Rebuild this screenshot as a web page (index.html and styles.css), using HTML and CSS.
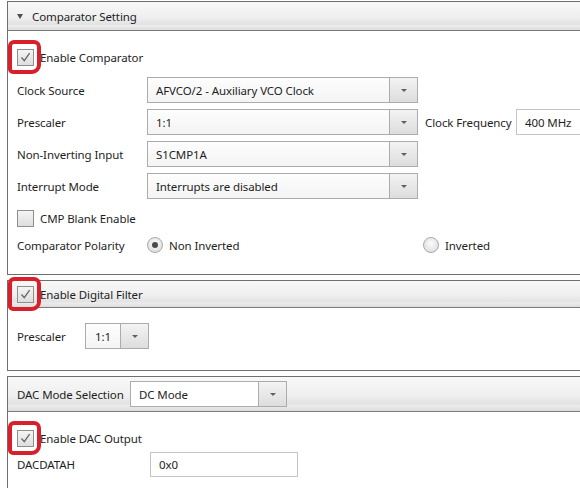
FILE: index.html
```html
<!DOCTYPE html>
<html>
<head>
<meta charset="utf-8">
<link rel="stylesheet" href="styles.css">
</head>
<body>
<div class="page">
  <section class="panel p1">
    <div class="hdr h1">
      <span class="tri"></span>
      <span class="title">Comparator Setting</span>
    </div>
    <div class="body b1">
      <div class="chkrow first">
        <span class="hl"></span>
        <span class="chk on"><svg width="15" height="15" viewBox="0 0 15 15"><path d="M3.5 7.5 L6.3 10.6 L11.6 3.2" fill="none" stroke="#666" stroke-width="1.3"/></svg></span>
        <span class="ctext">Enable Comparator</span>
      </div>
      <div class="frow r-first">
        <span class="lbl">Clock Source</span>
        <div class="dd w270"><span class="ddv">AFVCO/2 - Auxiliary VCO Clock</span><span class="ddb"><span class="arr"></span></span></div>
      </div>
      <div class="frow">
        <span class="lbl">Prescaler</span>
        <div class="dd w270"><span class="ddv">1:1</span><span class="ddb"><span class="arr"></span></span></div>
        <span class="lbl2">Clock Frequency</span>
        <div class="inp wfreq">400 MHz</div>
      </div>
      <div class="frow">
        <span class="lbl">Non-Inverting Input</span>
        <div class="dd w270"><span class="ddv">S1CMP1A</span><span class="ddb"><span class="arr"></span></span></div>
      </div>
      <div class="frow">
        <span class="lbl">Interrupt Mode</span>
        <div class="dd w270"><span class="ddv">Interrupts are disabled</span><span class="ddb"><span class="arr"></span></span></div>
      </div>
      <div class="chkrow blank">
        <span class="chk"></span>
        <span class="ctext">CMP Blank Enable</span>
      </div>
      <div class="radrow">
        <span class="lbl">Comparator Polarity</span>
        <span class="radopt w276"><span class="rad on"></span><span class="rtext">Non Inverted</span></span>
        <span class="radopt"><span class="rad"></span><span class="rtext">Inverted</span></span>
      </div>
    </div>
  </section>

  <section class="panel p2">
    <div class="hdr h2">
      <div class="chkrow">
        <span class="hl"></span>
        <span class="chk on"><svg width="15" height="15" viewBox="0 0 15 15"><path d="M3.5 7.5 L6.3 10.6 L11.6 3.2" fill="none" stroke="#666" stroke-width="1.3"/></svg></span>
        <span class="ctext">Enable Digital Filter</span>
      </div>
    </div>
    <div class="body b2">
      <div class="frow nomargin">
        <span class="lbl short">Prescaler</span>
        <div class="dd w63"><span class="ddv c">1:1</span><span class="ddb"><span class="arr"></span></span></div>
      </div>
    </div>
  </section>

  <section class="panel p3">
    <div class="hdr h3">
      <span class="lbl dac">DAC Mode Selection</span>
      <div class="dd w156 white"><span class="ddv">DC Mode</span><span class="ddb"><span class="arr"></span></span></div>
    </div>
    <div class="body b3">
      <div class="chkrow">
        <span class="hl"></span>
        <span class="chk on"><svg width="15" height="15" viewBox="0 0 15 15"><path d="M3.5 7.5 L6.3 10.6 L11.6 3.2" fill="none" stroke="#666" stroke-width="1.3"/></svg></span>
        <span class="ctext">Enable DAC Output</span>
      </div>
      <div class="frow dacrow">
        <span class="lbl wdac">DACDATAH</span>
        <div class="inp w147">0x0</div>
      </div>
    </div>
  </section>
</div>
</body>
</html>
```

FILE: styles.css
```css
html, body {
  margin: 0;
  padding: 0;
  background: #ffffff;
}
.page {
  width: 580px;
  height: 488px;
  overflow: hidden;
  font-family: "Segoe UI", "Noto Sans", "Open Sans", sans-serif;
  font-size: 11.5px;
  letter-spacing: -0.1px;
  color: #1e1e1e;
  white-space: nowrap;
}
.panel {
  margin-left: 7px;
  width: 640px;
  border: 1px solid #6f6f6f;
  border-right: none;
  background: #fff;
}
.p1 { margin-top: 1px; }
.p2, .p3 { margin-top: 5px; }
.hdr {
  display: flex;
  align-items: center;
  border-bottom: 1px solid #7a7a7a;
  background: linear-gradient(#f8f8f8 0%, #efefef 55%, #e2e2e2 80%, #ececec 84%, #dcdcdc 100%);
  box-sizing: border-box;
}
.h1 { height: 29px; padding-left: 9px; }
.h2 { height: 27px; padding-left: 9px; }
.h3 { height: 35px; padding-left: 9px; }
.tri {
  width: 0;
  height: 0;
  border-left: 3.5px solid transparent;
  border-right: 3.5px solid transparent;
  border-top: 5px solid #4e4e4e;
  margin-right: 9px;
  margin-top: 1px;
}
.body {
  display: flex;
  flex-direction: column;
  padding-left: 9px;
}
.b1 { padding-top: 16px; padding-bottom: 19px; }
.b2 { padding-top: 15px; padding-bottom: 21px; }
.b3 { padding-top: 16px; height: 76px; box-sizing: border-box; }

.chkrow {
  position: relative;
  display: flex;
  align-items: center;
  height: 20px;
}
.chk {
  width: 15px;
  height: 15px;
  border: 1px solid #8e8e8e;
  background: linear-gradient(#f5f5f5, #dedede);
  display: flex;
  align-items: center;
  justify-content: center;
  margin-right: 6px;
  flex: none;
}
.chk svg { display: block; }
.hl {
  position: absolute;
  left: -9px;
  top: -7px;
  width: 25px;
  height: 26px;
  border: 4px solid #d9202a;
  border-radius: 6px 7px 9px 5px;
  pointer-events: none;
}
.frow {
  display: flex;
  align-items: center;
  height: 26px;
  margin-top: 6px;
}
.frow.nomargin { margin-top: 0; }
.r-first { margin-top: 10px; }
.blank { margin-top: 9px; }
.lbl { width: 130px; flex: none; }
.lbl.short { width: 68px; }
.lbl.dac { width: 113px; }
.lbl.wdac { width: 133px; }
.lbl2 { margin-left: 7px; width: 91px; flex: none; }

.dd {
  display: flex;
  height: 26px;
  box-sizing: border-box;
  border: 1px solid #acacac;
  background: linear-gradient(#fdfdfd, #f4f4f4);
  flex: none;
}
.dd.white { background: #fff; }
.w270 { width: 271px; }
.w63 { width: 64px; }
.w156 { width: 157px; }
.ddv {
  flex: 1;
  display: flex;
  align-items: center;
  padding-left: 8px;
}
.ddv.c { justify-content: center; padding-left: 0; }
.ddb {
  width: 27px;
  border-left: 1px solid #acacac;
  background: linear-gradient(#f3f3f3, #dddddd);
  display: flex;
  align-items: center;
  justify-content: center;
}
.arr {
  width: 0;
  height: 0;
  border-left: 3.5px solid transparent;
  border-right: 3.5px solid transparent;
  border-top: 3.5px solid #5f5f5f;
}
.inp {
  height: 26px;
  box-sizing: border-box;
  border: 1px solid #c4c4c4;
  background: #fff;
  display: flex;
  align-items: center;
  padding-left: 8px;
  flex: none;
}
.wfreq { width: 120px; }
.w147 { width: 148px; height: 25px; }
.dacrow { margin-top: 4px; height: 25px; }

.radrow {
  display: flex;
  align-items: center;
  height: 20px;
  margin-top: 7px;
}
.radopt { display: flex; align-items: center; }
.w276 { width: 276px; }
.rad {
  width: 14px;
  height: 14px;
  border-radius: 50%;
  border: 1px solid #a8a8a8;
  background: radial-gradient(circle at 50% 40%, #fbfbfb 0%, #e6e6e6 60%, #d6d6d6 100%);
  display: flex;
  align-items: center;
  justify-content: center;
  margin-right: 6px;
  flex: none;
}
.rad.on::after {
  content: "";
  width: 6px;
  height: 6px;
  border-radius: 50%;
  background: #4a4a4a;
}
```
